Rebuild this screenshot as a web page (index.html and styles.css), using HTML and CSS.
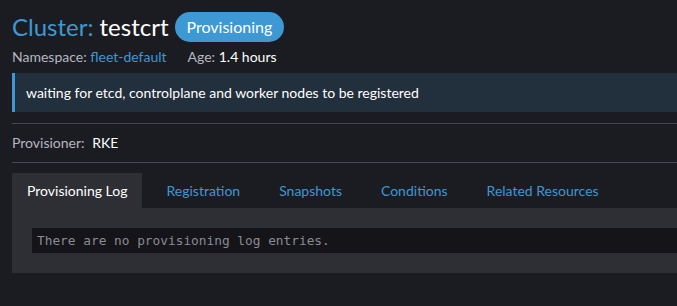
FILE: index.html
```html
<!DOCTYPE html>
<html lang="en">
<head>
    <meta charset="UTF-8">
    <meta name="viewport" content="width=device-width, initial-scale=1.0">
    <title>Cluster: testcrt</title>
    <link rel="stylesheet" href="styles.css">
</head>
<body>
    <header class="masthead">
        <div class="title-row">
            <h1><span class="title-prefix">Cluster:</span> testcrt</h1>
            <span class="badge">Provisioning</span>
        </div>
        <div class="subheader">
            <span>Namespace: <a href="#">fleet-default</a></span>
            <span>Age: <span class="value">1.4 hours</span></span>
        </div>
    </header>

    <div class="banner">waiting for etcd, controlplane and worker nodes to be registered</div>

    <div class="detail-row">
        <span class="label">Provisioner:</span>
        <span class="value">RKE</span>
    </div>

    <div class="tabs">
        <ul class="tab-list">
            <li class="tab active"><a href="#">Provisioning Log</a></li>
            <li class="tab"><a href="#">Registration</a></li>
            <li class="tab"><a href="#">Snapshots</a></li>
            <li class="tab"><a href="#">Conditions</a></li>
            <li class="tab"><a href="#">Related Resources</a></li>
        </ul>
        <div class="tab-panel">
            <div class="logs">There are no provisioning log entries.</div>
        </div>
    </div>
</body>
</html>
```

FILE: styles.css
```css
body {
    margin: 0;
    padding: 12px 0 0 12px;
    background-color: #1b1c21;
    color: #ffffff;
    font-family: Lato, "Noto Sans", sans-serif;
    font-size: 14px;
}
a {
    color: #3d98d3;
    text-decoration: none;
}
.title-row {
    display: flex;
    align-items: center;
    gap: 6px;
    height: 30px;
}
h1 {
    margin: 0;
    font-size: 24px;
    font-weight: 400;
    line-height: 30px;
}
.title-prefix {
    color: #3d98d3;
}
.badge {
    background-color: #3d98d3;
    color: #ffffff;
    font-size: 16px;
    line-height: 30px;
    padding: 0 12px;
    border-radius: 15px;
}
.subheader {
    display: flex;
    gap: 21px;
    margin-top: 6px;
    line-height: 17px;
    color: #b6b6c2;
}
.subheader .value {
    color: #ffffff;
}
.banner {
    margin-top: 8px;
    background-color: #222f3c;
    border-left: 3px solid #3d98d3;
    padding: 0 0 0 11px;
    height: 39px;
    line-height: 39px;
}
.detail-row {
    margin-top: 11px;
    border-top: 1px solid #46474e;
    border-bottom: 1px solid #46474e;
    height: 38px;
    line-height: 38px;
}
.detail-row .label {
    color: #b6b6c2;
    margin-right: 4px;
}
.tabs {
    margin-top: 10px;
}
.tab-list {
    display: flex;
    gap: 9px;
    list-style: none;
    margin: 0;
    padding: 0;
}
.tab a {
    display: block;
    padding: 0 15px;
    height: 35px;
    line-height: 35px;
}
.tab.active {
    background-color: #2e2f35;
}
.tab.active a {
    color: #ffffff;
}
.tab-panel {
    background-color: #2e2f35;
    padding: 20px 0 20px 20px;
}
.logs {
    background-color: #141419;
    color: #8a8b93;
    font-family: "DejaVu Sans Mono", monospace;
    font-size: 12.8px;
    height: 25px;
    line-height: 25px;
    padding-left: 5px;
}
```
